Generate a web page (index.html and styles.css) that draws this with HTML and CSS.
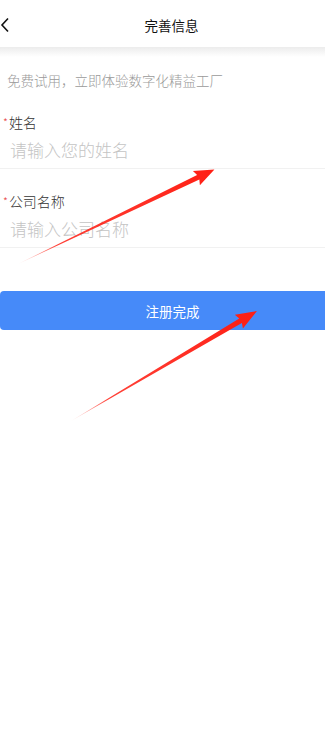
FILE: index.html
```html
<!DOCTYPE html>
<html lang="zh-CN">
<head>
  <meta charset="UTF-8" />
  <meta name="viewport" content="width=device-width, initial-scale=1.0"/>
  <title>完善信息</title>
  <link rel="stylesheet" href="styles.css">
</head>
<body>

  <!-- Top bar -->
  <div class="nav-bar">
    <span class="back-btn">
      <svg width="10" height="16" viewBox="0 0 10 16">
        <path d="M8 1.5 L2 8 L8 14.5" fill="none" stroke="#111" stroke-width="1.6"/>
      </svg>
    </span>
    <span class="nav-title">完善信息</span>
  </div>
  <div class="nav-shadow"></div>

  <p class="intro">免费试用，立即体验数字化精益工厂</p>

  <!-- Form -->
  <div class="form-item">
    <div class="form-label"><span class="required">*</span>姓名</div>
    <input class="form-input" type="text" placeholder="请输入您的姓名" />
  </div>

  <div class="form-item">
    <div class="form-label"><span class="required">*</span>公司名称</div>
    <input class="form-input" type="text" placeholder="请输入公司名称" />
  </div>

  <button class="submit-btn">注册完成</button>

  <!-- Annotation arrows -->
  <svg class="arrows" width="325" height="753" viewBox="0 0 325 753">
    <defs>
      <linearGradient id="fade" x1="0" y1="0" x2="1" y2="0">
        <stop offset="0" stop-color="#ff1f14" stop-opacity="0.1"/>
        <stop offset="0.2" stop-color="#ff1f14" stop-opacity="0.85"/>
        <stop offset="1" stop-color="#ff1f14"/>
      </linearGradient>
    </defs>
    <polygon transform="translate(18 264) rotate(-25.7)" fill="url(#fade)"
      points="0,0 200,-2.6 198,-8 218,0 198,8 200,2.6"/>
    <polygon transform="translate(71 421) rotate(-30.6)" fill="url(#fade)"
      points="0,0 197,-2.6 195,-8 216,0 195,8 197,2.6"/>
  </svg>

</body>
</html>
```

FILE: styles.css
```css
body {
  margin: 0;
  background: #fff;
  font-family: "Noto Sans CJK SC", "Noto Sans", sans-serif;
  font-weight: 300;
  color: #333;
  position: relative;
  min-height: 753px;
  overflow: hidden;
}

/* Top bar */
.nav-bar {
  height: 47px;
  display: flex;
  align-items: center;
  justify-content: center;
  position: relative;
  background: #fff;
  padding-left: 18px;
}

.back-btn {
  position: absolute;
  left: 0;
  top: 17px;
  display: flex;
}

.nav-title {
  font-size: 13.5px;
  font-weight: 400;
  color: #111;
  margin-top: 2px;
}

.nav-shadow {
  height: 10px;
  background: linear-gradient(#ececec, #fff);
}

.intro {
  margin: 13px 0 0 7px;
  font-size: 13.5px;
  line-height: 20px;
  color: #9a9a9a;
}

/* Form */
.form-item {
  padding: 22px 0 7px;
  border-bottom: 1px solid #f1f1f1;
  display: flex;
  flex-direction: column;
  gap: 5px;
}

.form-label {
  font-size: 14px;
  line-height: 20px;
  color: #333;
  padding-left: 3px;
}

.required {
  color: #e84a4a;
  font-size: 11px;
  vertical-align: top;
  margin-right: 1px;
}

.form-input {
  border: none;
  outline: none;
  padding: 0 0 0 10px;
  margin: 0;
  height: 24px;
  font-family: inherit;
  font-weight: 300;
  font-size: 17px;
  color: #333;
  background: transparent;
}

.form-input::placeholder {
  color: #c4c4c4;
}

.submit-btn {
  display: block;
  margin-top: 43px;
  width: 100%;
  height: 39px;
  border: none;
  border-radius: 4px 0 0 4px;
  background: #468af9;
  color: #fff;
  font-family: inherit;
  font-weight: 400;
  font-size: 13.5px;
  padding: 0 0 0 20px;
}

/* Annotations */
.arrows {
  position: absolute;
  left: 0;
  top: 0;
  pointer-events: none;
}
```
